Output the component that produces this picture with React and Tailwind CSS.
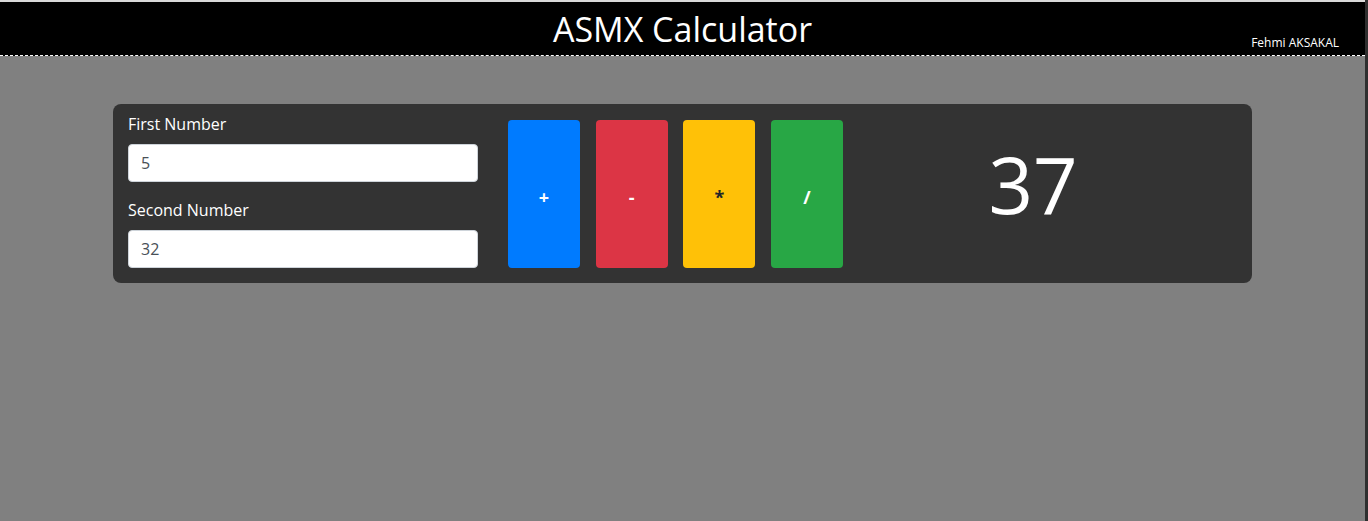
import { useState } from "react";

const ops = [
    { label: "+", cls: "bg-[#007bff] text-white", fn: (a, b) => a + b },
    { label: "-", cls: "bg-[#dc3545] text-white", fn: (a, b) => a - b },
    { label: "*", cls: "bg-[#ffc107] text-[#212529]", fn: (a, b) => a * b },
    { label: "/", cls: "bg-[#28a745] text-white", fn: (a, b) => a / b },
];

const App = () => {
    const [first, setFirst] = useState("5");
    const [second, setSecond] = useState("32");
    const [result, setResult] = useState(37);

    const handleClick = (fn) => {
        setResult(fn(Number(first), Number(second)));
    };

    return (
        <div className="min-h-screen flex flex-col bg-[#808080] border-r-[3px] border-[#2f2f2f] font-['Open_Sans',sans-serif]">
            <div className="h-[2px] bg-[#d9d9d9]"></div>
            <header className="h-[54px] bg-black border-b border-dashed border-white flex text-white">
                <div className="flex-1 pl-[26px]"></div>
                <h1 className="pt-[7px] text-[34px] leading-[1.2]">ASMX Calculator</h1>
                <div className="flex-1 flex justify-end items-end pr-[26px] pb-[4px]">
                    <span className="text-[12px] leading-4">Fehmi AKSAKAL</span>
                </div>
            </header>

            <div className="mt-[48px] mx-auto w-[1139px] h-[179px] bg-[#333333] rounded-lg flex items-end pt-2 pb-[15px] px-[15px]">
                <div className="w-[350px] flex flex-col">
                    <label className="text-white text-base leading-6">First Number</label>
                    <input
                        className="mt-2 h-[38px] px-3 bg-white border border-[#ced4da] rounded text-base text-[#495057] outline-none"
                        value={first}
                        onChange={(e) => setFirst(e.target.value)}
                    />
                    <label className="mt-4 text-white text-base leading-6">Second Number</label>
                    <input
                        className="mt-2 h-[38px] px-3 bg-white border border-[#ced4da] rounded text-base text-[#495057] outline-none"
                        value={second}
                        onChange={(e) => setSecond(e.target.value)}
                    />
                </div>

                <div className="ml-[30px] flex gap-[15.67px]">
                    {ops.map((op) => (
                        <button
                            key={op.label}
                            onClick={() => handleClick(op.fn)}
                            className={`w-[72px] h-[148px] pt-[6px] rounded text-lg font-bold ${op.cls}`}
                        >
                            {op.label}
                        </button>
                    ))}
                </div>

                <div className="flex-1 self-start mt-[33px] pr-[14px] text-center text-white text-[78px] leading-none">
                    {result}
                </div>
            </div>
        </div>
    );
};

export default App;
